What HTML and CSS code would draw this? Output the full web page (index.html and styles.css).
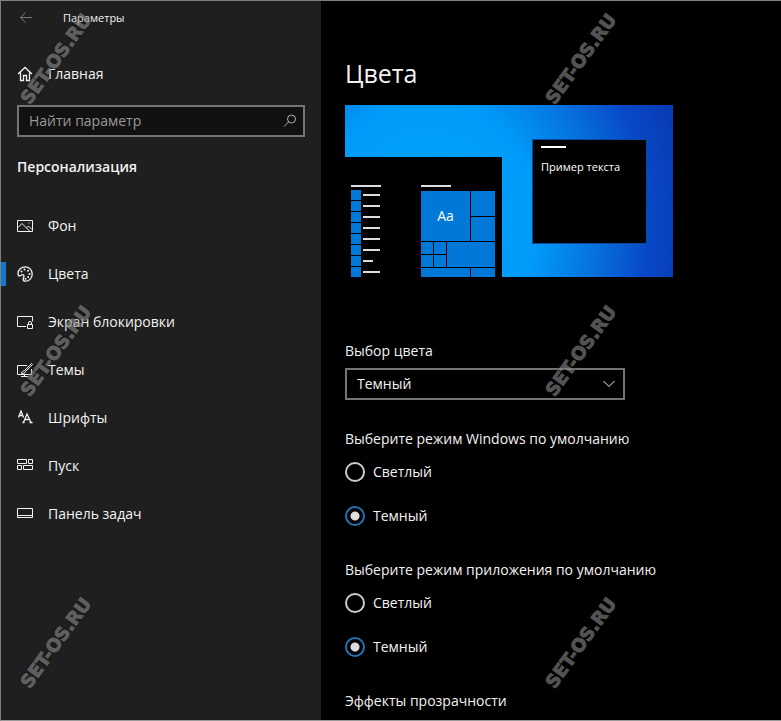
FILE: index.html
```html
<!DOCTYPE html>
<html lang="ru">
<head>
    <meta charset="UTF-8">
    <meta name="viewport" content="width=device-width, initial-scale=1.0">
    <title>Параметры</title>
    <link rel="stylesheet" href="styles.css">
</head>
<body>
    <div class="window">
        <aside class="sidebar">
            <div class="titlebar">
                <button class="back" type="button" aria-label="Назад">
                    <svg width="14" height="12" viewBox="0 0 14 12"><path d="M13 5.500H1.500M6.500.5l-5 5 5 5"/></svg>
                </button>
                <span class="app-name">Параметры</span>
            </div>

            <a class="nav-link home" href="#">
                <svg width="16" height="16" viewBox="0 0 16 16"><path d="M1 8L8 1.500 15 8M3.500 6.500v8h3V9.500h3v5h3v-8" stroke-width="1.300"/></svg>
                Главная
            </a>

            <div class="search">
                <input type="text" placeholder="Найти параметр" aria-label="Найти параметр">
                <svg width="14" height="14" viewBox="0 0 14 14"><circle cx="8.500" cy="5" r="4"/><path d="M5.500 8L1 12.500"/></svg>
            </div>

            <h2>Персонализация</h2>

            <nav>
                <a class="nav-link" href="#">
                    <svg width="16" height="16" viewBox="0 0 16 16"><path d="M.5 2.500h15v11H.5zM1 9.500l4-4 7.500 7.500M9.500 10l2-2 3.500 3.500"/><path d="M11.500 5h1"/></svg>
                    Фон
                </a>
                <a class="nav-link active" href="#">
                    <svg width="16" height="16" viewBox="0 0 16 16">
                        <path d="M1 7.500C1 3.500 4.500.8 8.200.8c4 0 7 3.200 7 7.200s-3 7.200-6.700 7.200c-1.500 0-2.300-.8-2.300-2 0-1.500.8-2.200.8-3.200 0-.9-.7-1.300-1.500-1.300-1.200 0-1.500 1.300-2.800 1.300C1.500 10 1 9 1 7.500z" stroke-width="1.300"/>
                        <g class="dots"><circle cx="4.500" cy="5.500" r="1"/><circle cx="7.500" cy="3.500" r="1"/><circle cx="11" cy="4.800" r="1"/><circle cx="12.500" cy="8" r="1"/><circle cx="11.200" cy="11" r="1"/><circle cx="8.500" cy="12.800" r="1"/></g>
                    </svg>
                    Цвета
                </a>
                <a class="nav-link" href="#">
                    <svg width="16" height="16" viewBox="0 0 16 16"><path d="M9 12.500H.5v-10h15v5M10.500 10.500h5v4h-5zM11.500 10.500V9a1.500 1.500 0 0 1 3 0v1.500"/></svg>
                    Экран блокировки
                </a>
                <a class="nav-link" href="#">
                    <svg width="16" height="16" viewBox="0 0 16 16"><path d="M10 3.500H.5v9h14V7M4 14.500h7M7.500 12.500v2M14.500 1.500L7.500 8.500l1 1 7-7zM7.500 8.500c-2 0-1.500 2-3.500 2.500 2 .8 4.500.3 4.500-1.500"/></svg>
                    Темы
                </a>
                <a class="nav-link" href="#">
                    <svg width="16" height="16" viewBox="0 0 16 16"><path d="M1.500 7.500L4 1l2.500 6.500M2.500 5.500h3M6.500 12.500L10 4l4 8.500M8 9.500h4.500M5.500 12.500h2M12.500 12.500h3" stroke-width="1.300"/></svg>
                    Шрифты
                </a>
                <a class="nav-link" href="#">
                    <svg width="16" height="16" viewBox="0 0 16 16"><path d="M.5 1.500h9v4h-9zM11.500 1.500h4v4h-4zM.5 7.500h4v4h-4zM6.500 7.500h9v4h-9z"/></svg>
                    Пуск
                </a>
                <a class="nav-link" href="#">
                    <svg width="16" height="16" viewBox="0 0 16 16"><path d="M.5 2.500h15v9H.5zM.5 9.500h15"/></svg>
                    Панель задач
                </a>
            </nav>
        </aside>

        <main class="content">
            <h1>Цвета</h1>

            <div class="preview">
                <div class="start">
                    <div class="apps">
                        <span class="bar"></span>
                        <ul class="app-list">
                            <li></li><li></li><li></li><li></li><li></li><li></li><li class="short"></li><li></li>
                        </ul>
                    </div>
                    <div class="tile-group">
                        <span class="bar"></span>
                        <div class="tiles">
                            <span class="tile large">Aa</span>
                            <span class="tile"></span>
                            <span class="tile"></span>
                            <span class="tile"></span>
                            <span class="tile"></span>
                            <span class="tile wide"></span>
                            <span class="tile"></span>
                            <span class="tile"></span>
                            <span class="tile half"></span>
                            <span class="tile"></span>
                        </div>
                    </div>
                </div>
                <div class="sample">
                    <span class="sample-bar"></span>
                    Пример текста
                </div>
            </div>

            <label class="caption" for="color-mode">Выбор цвета</label>
            <div class="select">
                <select id="color-mode">
                    <option>Светлый</option>
                    <option selected>Темный</option>
                </select>
                <svg width="12" height="8" viewBox="0 0 12 8"><path d="M.5 1L6 6.500 11.500 1"/></svg>
            </div>

            <fieldset>
                <legend>Выберите режим Windows по умолчанию</legend>
                <label class="radio"><input type="radio" name="windows-mode">Светлый</label>
                <label class="radio"><input type="radio" name="windows-mode" checked>Темный</label>
            </fieldset>

            <fieldset>
                <legend>Выберите режим приложения по умолчанию</legend>
                <label class="radio"><input type="radio" name="app-mode">Светлый</label>
                <label class="radio"><input type="radio" name="app-mode" checked>Темный</label>
            </fieldset>

            <p class="caption">Эффекты прозрачности</p>
        </main>

        <div class="watermarks" aria-hidden="true">
            <span>SET-OS.RU</span><span>SET-OS.RU</span>
            <span>SET-OS.RU</span><span>SET-OS.RU</span>
            <span>SET-OS.RU</span><span>SET-OS.RU</span>
        </div>
    </div>
</body>
</html>
```
FILE: styles.css
```css
* {
    box-sizing: border-box;
}
body {
    margin: 0;
    background: #000;
    color: #f2f2f2;
    font-family: 'Open Sans', 'Noto Sans', sans-serif;
    font-size: 14px;
    line-height: 20px;
}
h1, h2, p, ul, fieldset {
    margin: 0;
    padding: 0;
}
svg {
    flex: none;
    fill: none;
    stroke: currentColor;
}
.window {
    position: relative;
    display: flex;
    min-height: 100vh;
    overflow: hidden;
    border: 1px solid #7c7f7e;
    border-right: none;
    border-bottom-color: #9a9a9a;
}

/* Sidebar */
.sidebar {
    flex: none;
    width: 320px;
    background: #1f1f1f;
}
.titlebar {
    display: flex;
    align-items: center;
    gap: 30px;
    height: 33px;
    padding-left: 18px;
    font-size: 11px;
}
.back {
    display: flex;
    padding: 0;
    border: none;
    background: none;
    color: #777;
}
.nav-link {
    display: flex;
    align-items: center;
    gap: 15px;
    height: 48px;
    padding-left: 16px;
    color: inherit;
    text-decoration: none;
}
.home {
    margin-top: 16px;
}
.active {
    padding-left: 11px;
    border-left: 5px solid #0078d7;
    border-image: linear-gradient(transparent 12px, #1479cc 12px, #1479cc 36px, transparent 36px) 0 0 0 5;
}
.dots {
    fill: currentColor;
    stroke: none;
}
.search {
    display: flex;
    align-items: center;
    height: 32px;
    margin: 7px 16px 0;
    padding: 0 6px 0 10px;
    border: 2px solid #747474;
    background: #111;
    color: #b0b0b0;
}
.search input {
    flex: 1;
    min-width: 0;
    padding: 0;
    border: none;
    outline: none;
    background: none;
    color: inherit;
    font: inherit;
}
.search input::placeholder {
    color: #999;
    opacity: 1;
}
h2 {
    margin: 20px 16px 25px;
    font-size: 14px;
    font-weight: 600;
    line-height: 20px;
}

/* Content */
.content {
    flex: 1;
    min-width: 0;
    padding: 54px 24px 6px;
}
h1 {
    margin-bottom: 14px;
    font-size: 25px;
    font-weight: 400;
    line-height: 36px;
}
.preview {
    display: flex;
    align-items: flex-end;
    justify-content: space-between;
    width: 328px;
    height: 172px;
    margin-bottom: 64px;
    background: radial-gradient(ellipse 260px 300px at 25% 70%, #00a8fc 0%, #009bfa 42%, #0670dc 66%, #0848c8 85%, #083cb4 100%);
}
.start {
    display: flex;
    gap: 40px;
    width: 157px;
    height: 120px;
    padding: 28px 6px 0;
    background: #000;
}
.bar {
    display: block;
    width: 30px;
    height: 2px;
    background: #ddd;
}
.app-list {
    display: grid;
    gap: 1px;
    margin-top: 3px;
    list-style: none;
}
.app-list li {
    display: flex;
    align-items: center;
    gap: 2px;
    height: 10px;
}
.app-list li::before {
    content: '';
    width: 10px;
    height: 10px;
    background: #0078d7;
}
.app-list li::after {
    content: '';
    width: 17px;
    height: 2px;
    background: #ddd;
}
.app-list .short::after {
    width: 10px;
}
.tiles {
    display: grid;
    grid-template-columns: 12px 12px 23px 24px;
    grid-template-rows: 25px 24px 12px 12px 9px;
    gap: 1px;
    margin-top: 4px;
}
.tile {
    background: #0078d7;
}
.large {
    display: grid;
    place-items: center;
    grid-column: span 3;
    grid-row: span 2;
    color: #fff;
}
.wide {
    grid-column: span 2;
    grid-row: span 2;
}
.half {
    grid-column: span 3;
}
.sample {
    width: 115px;
    height: 105px;
    margin: 0 26px 33px 0;
    padding: 6px 8px;
    border: 1px solid #0a4a9c;
    background: #000;
    color: #fff;
    font-size: 11px;
    white-space: nowrap;
}
.sample-bar {
    display: block;
    width: 25px;
    height: 2px;
    margin-bottom: 9px;
    background: #fff;
}
.caption {
    display: block;
}
.select {
    position: relative;
    width: 280px;
    margin: 7px 0 29px;
}
.select select {
    display: block;
    width: 100%;
    height: 32px;
    padding: 0 10px;
    appearance: none;
    border: 2px solid #747474;
    border-radius: 0;
    background: #000;
    color: inherit;
    font: inherit;
}
.select svg {
    position: absolute;
    top: 12px;
    right: 10px;
    pointer-events: none;
}
fieldset {
    min-width: 0;
    margin-bottom: 34px;
    border: none;
}
legend {
    padding: 0;
    margin-bottom: 13px;
}
.radio {
    display: flex;
    align-items: center;
    gap: 8px;
    height: 20px;
}
.radio + .radio {
    margin-top: 24px;
}
.radio input {
    width: 20px;
    height: 20px;
    margin: 0;
    appearance: none;
    border: 2px solid #ccc;
    border-radius: 50%;
}
.radio input:checked {
    border-color: #2672b4;
    background: radial-gradient(circle, #ddd 4px, transparent 5px);
}

/* Watermark pattern laid over the whole window */
.watermarks {
    position: absolute;
    top: 48px;
    left: -5px;
    display: grid;
    grid-template-columns: 120px 120px;
    gap: 272px 405px;
    pointer-events: none;
}
.watermarks span {
    height: 20px;
    transform: rotate(-54deg);
    color: #8a8a8a;
    opacity: 0.6;
    font-family: 'DejaVu Sans', sans-serif;
    font-size: 18px;
    font-weight: 700;
    text-align: center;
    text-shadow: 0 0 3px #000;
    -webkit-text-stroke: 1px #8a8a8a;
}
```
